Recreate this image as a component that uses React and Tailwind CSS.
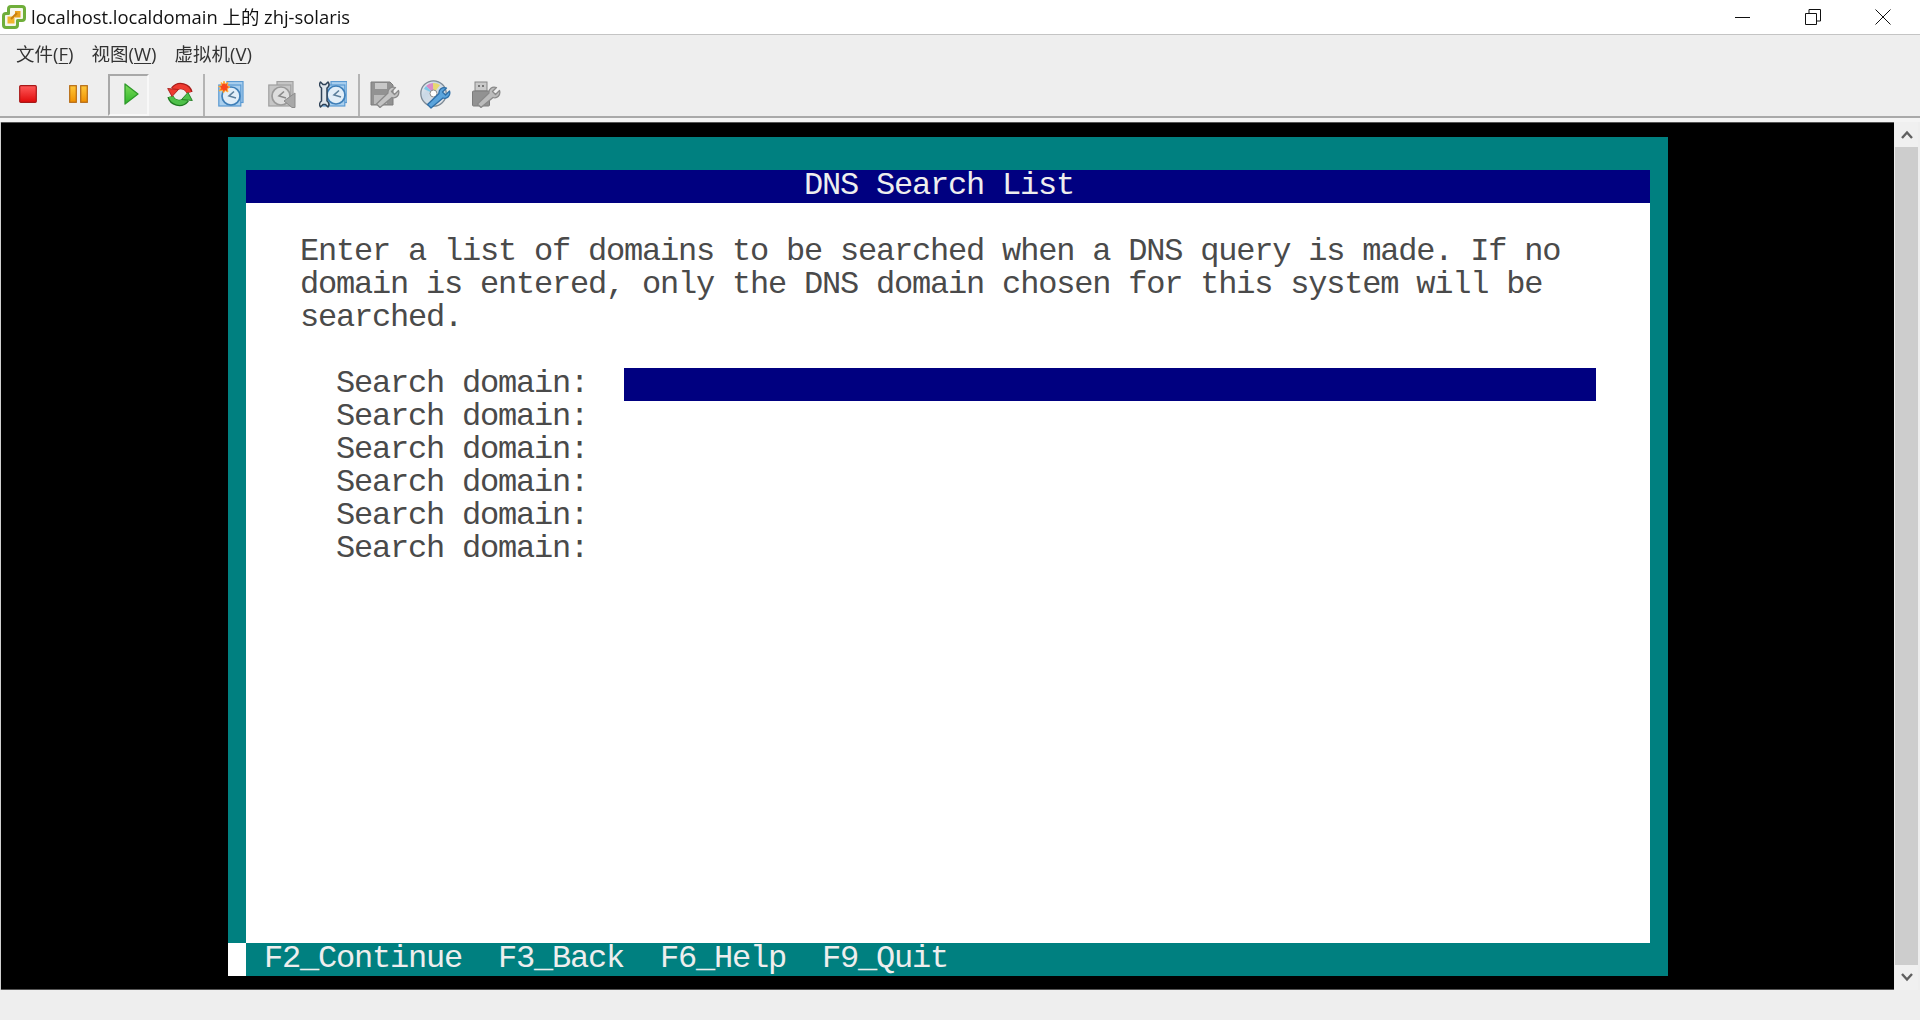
import React from "react";

const SANS = "font-['Open_Sans','Noto_Sans_CJK_SC',sans-serif]";

function Logo() {
  return (
    <svg width="24" height="24" viewBox="0 0 24 24" className="blur-[0.3px]">
      <path d="M9 1.5 H20 Q22.5 1.5 22.5 4 V13 Q22.5 15.5 20 15.5 H15.5 V20 Q15.5 22.5 13 22.5 H4 Q1.5 22.5 1.5 20 V11 Q1.5 8.5 4 8.5 H6.5 V4 Q6.5 1.5 9 1.5 Z" fill="#f6f6ee" stroke="#6fae3a" strokeWidth="3" strokeLinejoin="round" />
      <path d="M10.5 6 H18.5 V12.5 H13 V6 Z" fill="#e9a21c" />
      <path d="M5.5 11.5 H12.5 V18.5 H5.5 Z" fill="#f2b62e" />
      <path d="M9 14 L15 8" stroke="#c97f10" strokeWidth="2" />
    </svg>
  );
}

function Stop() {
  return (
    <svg width="18" height="18" viewBox="0 0 18 18" className="blur-[0.3px]">
      <defs>
        <linearGradient id="st" x1="0" y1="0" x2="0" y2="1">
          <stop offset="0" stopColor="#ff5a5a" />
          <stop offset="1" stopColor="#e00a0a" />
        </linearGradient>
      </defs>
      <rect x="0.7" y="0.7" width="16.6" height="16.6" rx="1" fill="url(#st)" stroke="#a81818" strokeWidth="1.2" />
    </svg>
  );
}

function Pause() {
  return (
    <svg width="19" height="18" viewBox="0 0 19 18" className="blur-[0.3px]">
      <defs>
        <linearGradient id="pa" x1="0" y1="0" x2="0" y2="1">
          <stop offset="0" stopColor="#ffc83a" />
          <stop offset="1" stopColor="#f09000" />
        </linearGradient>
      </defs>
      <rect x="0.7" y="0.7" width="6.6" height="16.6" fill="url(#pa)" stroke="#b56a12" strokeWidth="1.2" />
      <rect x="11.7" y="0.7" width="6.6" height="16.6" fill="url(#pa)" stroke="#b56a12" strokeWidth="1.2" />
    </svg>
  );
}

function Play() {
  return (
    <svg width="15" height="22" viewBox="0 0 15 22" className="ml-[6px] mb-[2px] blur-[0.3px]">
      <defs>
        <linearGradient id="pl" x1="0" y1="0" x2="0" y2="1">
          <stop offset="0" stopColor="#7ddc5a" />
          <stop offset="1" stopColor="#2fb52a" />
        </linearGradient>
      </defs>
      <path d="M1 1 L14 11 L1 21 Z" fill="url(#pl)" stroke="#2f9a2a" strokeWidth="1.3" strokeLinejoin="round" />
    </svg>
  );
}

function Refresh() {
  return (
    <svg width="26" height="25" viewBox="0 0 26 25" className="blur-[0.3px]">
      <g fill="none" strokeLinecap="butt">
        <path d="M22.5 10.5 C21 4.5 12 1 6.5 7.5" stroke="#a81d1a" strokeWidth="6.4" />
        <path d="M22 10.5 C20.5 5 12 1.5 6.8 7.8" stroke="#ee3a30" strokeWidth="4.6" />
        <path d="M3.5 14.5 C5 20.5 14 24 19.5 17.5" stroke="#1f7a20" strokeWidth="6.4" />
        <path d="M4 14.5 C5.5 20 14 23.5 19.2 17.2" stroke="#4fc04a" strokeWidth="4.6" />
      </g>
      <path d="M0.7 6.5 L11.5 7.5 L5 14.5 Z" fill="#ee3a30" stroke="#a81d1a" strokeWidth="0.9" strokeLinejoin="round" />
      <path d="M25.3 18.5 L14.5 17.5 L21 10.5 Z" fill="#4fc04a" stroke="#1f7a20" strokeWidth="0.9" strokeLinejoin="round" />
    </svg>
  );
}

function Clock({ gray, cx = 13, cy = 15 }) {
  const face = gray ? "#dedede" : "#e2eef8";
  const edge = gray ? "#a0a0a0" : "#5b9ad2";
  const back = gray ? "#c6c6c6" : "#a9cfee";
  return (
    <g>
      <rect x="9" y="0.5" width="16" height="21" fill={back} stroke={edge} strokeWidth="1.2" />
      <rect x="0.8" y="4" width="22" height="21" fill={back} stroke={edge} strokeWidth="1.2" />
      <circle cx={cx} cy={cy} r="9" fill={face} stroke={gray ? "#9a9a9a" : "#3f7fb8"} strokeWidth="1.7" />
      <path d={`M${cx + 3} ${cy - 4.5} L${cx - 2} ${cy} L${cx + 5} ${cy + 2}`} fill="none" stroke={gray ? "#8a8a8a" : "#5c7f9c"} strokeWidth="1.6" />
    </g>
  );
}

function SnapNew() {
  return (
    <svg width="26" height="26" viewBox="0 0 26 26" className="blur-[0.3px]">
      <Clock />
      <path d="M6 0 L7 3 L10 1.5 L9.3 4.7 L12 6 L9.3 7.5 L10 11 L7 9.5 L5.5 12 L4.5 9 L1 10 L3 7 L0.5 5.5 L3.5 4.5 L3 1.5 L5 3 Z" fill="#f8491d" stroke="#ffb43a" strokeWidth="0.9" />
    </svg>
  );
}

function SnapRevert() {
  return (
    <svg width="28" height="27" viewBox="0 0 28 27" className="blur-[0.3px]">
      <Clock gray />
      <path d="M27 12 V26.5 H24 L16 20 Z" fill="#a8a8a8" stroke="#8c8c8c" />
    </svg>
  );
}

function SnapManage() {
  return (
    <svg width="28" height="27" viewBox="0 0 28 27" className="blur-[0.3px]">
      <g transform="translate(3 0)">
        <Clock cx={14} cy={14} />
      </g>
      <path d="M1.5 1 L4 3.5 L6.5 3.5 L9 1 C10.5 3 10 5.5 8 7 V20 C10 21.5 10.5 24 9 26 L6.5 23.5 H4 L1.5 26 C0 24 0.5 21.5 2.5 20 V7 C0.5 5.5 0 3 1.5 1 Z" fill="#dfe5ea" stroke="#2f4257" strokeWidth="1.5" strokeLinejoin="round" />
    </svg>
  );
}

function Wrench({ color = "#a9a9a9", edge = "#858585" }) {
  return (
    <path d="M6 26.5 L2.5 23 L14 12 C13.5 8 17 5 21.5 6.5 L17.5 10.5 L20.5 13.5 L24.5 9.5 C26 14 22 18 18 16.5 Z" fill={color} stroke={edge} strokeWidth="1.3" strokeLinejoin="round" />
  );
}

function Floppy() {
  return (
    <svg width="30" height="27" viewBox="0 0 30 27" className="blur-[0.3px]">
      <path d="M1 1 H20 L23 4 V24 H1 Z" fill="#929292" stroke="#7c7c7c" />
      <rect x="5" y="2" width="12" height="6" fill="#c8c8c8" />
      <rect x="4" y="14" width="13" height="9" fill="#bababa" />
      <g transform="translate(4 0)">
        <Wrench color="#c4c4c4" edge="#8a8a8a" />
      </g>
    </svg>
  );
}

function Cd() {
  return (
    <svg width="32" height="29" viewBox="0 0 32 29" className="blur-[0.3px]">
      <defs>
        <linearGradient id="cd" x1="0" y1="0" x2="1" y2="1">
          <stop offset="0" stopColor="#f2f2f2" />
          <stop offset="0.35" stopColor="#c9d8e6" />
          <stop offset="1" stopColor="#e8e8e8" />
        </linearGradient>
      </defs>
      <circle cx="13.5" cy="13.5" r="12.7" fill="url(#cd)" stroke="#7d8a96" strokeWidth="1.3" />
      <path d="M13.5 13.5 L6 6 A11 11 0 0 1 13 3 Z" fill="#d88cc8" />
      <path d="M13.5 13.5 L13 3 A11 11 0 0 1 20 5 Z" fill="#e8d870" />
      <path d="M13.5 13.5 L4 9 A11 11 0 0 1 6 6 Z" fill="#7fc8e8" />
      <circle cx="13.5" cy="13.5" r="3.5" fill="#fff" stroke="#8c8c8c" />
      <g transform="translate(5 1.5)">
        <Wrench color="#5ba4dc" edge="#2f6ea6" />
      </g>
    </svg>
  );
}

function Usb() {
  return (
    <svg width="30" height="27" viewBox="0 0 30 27" className="blur-[0.3px]">
      <rect x="4" y="1" width="12" height="9" fill="#cacaca" stroke="#868686" />
      <rect x="1.5" y="10" width="17" height="15" rx="1" fill="#929292" stroke="#7c7c7c" />
      <rect x="7" y="4" width="2" height="2" fill="#777" />
      <rect x="11" y="4" width="2" height="2" fill="#777" />
      <g transform="translate(4 0)">
        <Wrench color="#bcbcbc" edge="#8a8a8a" />
      </g>
    </svg>
  );
}

function Tool({ children, className = "w-[50px]" }) {
  return <div className={`h-[42px] pb-[2px] flex items-center justify-center ${className}`}>{children}</div>;
}

function MenuItem({ zh, k, className }) {
  return (
    <span className={className}>
      {zh}(<span className="underline underline-offset-2">{k}</span>)
    </span>
  );
}

const body = [
  "Enter a list of domains to be searched when a DNS query is made. If no",
  "domain is entered, only the DNS domain chosen for this system will be",
  "searched.",
];

function Row({ children, className = "" }) {
  return <div className={`h-[33px] leading-[31px] whitespace-pre ${className}`}>{children}</div>;
}

export default function App() {
  return (
    <div className="w-[1920px] h-[1020px] overflow-hidden flex flex-col bg-[#eeeeee]">
      <header className={`h-[35px] bg-white flex items-center border-b border-[#c4c4c4] ${SANS}`}>
        <div className="ml-[2px] w-[29px] flex items-center">
          <Logo />
        </div>
        <span className="text-[18.4px] text-[#111] leading-none blur-[0.3px]">localhost.localdomain 上的 zhj-solaris</span>
        <div className="ml-auto mr-[2px] flex items-center">
          <div className="w-[70px] flex justify-center">
            <svg width="16" height="16" viewBox="0 0 16 16"><path d="M0 8.5H15" stroke="#111" strokeWidth="1" /></svg>
          </div>
          <div className="w-[70px] flex justify-center">
            <svg width="16" height="16" viewBox="0 0 16 16" fill="none" stroke="#111"><path d="M0.5 4.5H11.5V15.5H0.5Z" /><path d="M4 4V0.5H15.5V12H12" /></svg>
          </div>
          <div className="w-[70px] flex justify-center">
            <svg width="16" height="16" viewBox="0 0 16 16" stroke="#111"><path d="M0.5 0.5L15.5 15.5M15.5 0.5L0.5 15.5" /></svg>
          </div>
        </div>
      </header>

      <div className={`h-[37px] flex items-center pl-[16px] text-[18.5px] text-[#333] blur-[0.35px] ${SANS}`}>
        <MenuItem zh="文件" k="F" className="mr-[18px]" />
        <MenuItem zh="视图" k="W" className="mr-[18px]" />
        <MenuItem zh="虚拟机" k="V" />
      </div>

      <div className="h-[42px] mt-[2px] flex items-center pl-[3px]">
        <Tool><Stop /></Tool>
        <Tool><Pause /></Tool>
        <div className="w-[50px] h-[42px] flex items-center justify-center">
          <div className="w-[41px] h-[42px] flex items-center justify-center border-2 border-t-[#a8a8a8] border-l-[#a8a8a8] border-r-[#f8f8f8] border-b-[#f8f8f8]">
            <Play />
          </div>
        </div>
        <Tool className="w-[50px] pl-[3px]"><Refresh /></Tool>
        <div className="w-[2px] h-[42px] bg-[#b4b4b4]" />
        <Tool className="w-[51px]"><SnapNew /></Tool>
        <Tool className="w-[51px]"><SnapRevert /></Tool>
        <Tool className="w-[51px]"><SnapManage /></Tool>
        <div className="w-[2px] h-[42px] bg-[#b4b4b4]" />
        <Tool><Floppy /></Tool>
        <Tool className="w-[51px]"><Cd /></Tool>
        <Tool><Usb /></Tool>
      </div>

      <div className="h-[2px] bg-[#a9a9a9]" />
      <div className="h-[4px] bg-[#f4f4f4]" />

      <div className="h-[868px] flex">
        <div className="w-[1px] bg-[#d0d0d0]" />
        <div className="w-[1894px] bg-black pl-[227px] pt-[14px] border-t border-b border-[#555]">
          <div className="w-[1440px] h-[839px] bg-[#008080] flex flex-col font-['Liberation_Mono',monospace] text-[32px] tracking-[-1.2px]">
            <div className="h-[33px]" />
            <div className="mx-[18px] flex-1 flex flex-col">
              <Row className="bg-[#000080] text-[#eeeeee] pl-[558px]">DNS Search List</Row>
              <div className="flex-1 bg-white text-[#4a4a4a] pl-[54px]">
                <div className="h-[33px]" />
                {body.map((t) => (
                  <Row key={t}>{t}</Row>
                ))}
                <div className="h-[33px]" />
                {Array.from({ length: 6 }).map((_, i) => (
                  <div key={i} className="h-[33px] flex">
                    <span className="w-[324px] pl-[36px] leading-[31px] whitespace-pre">Search domain:</span>
                    {i === 0 && <span className="w-[972px] bg-[#000080]" />}
                  </div>
                ))}
              </div>
            </div>
            <div className="h-[33px] flex">
              <div className="w-[18px] bg-white" />
              <Row className="text-[#eeeeee] pl-[18px]">F2_Continue  F3_Back  F6_Help  F9_Quit</Row>
            </div>
          </div>
        </div>
        <div className="w-[23px] ml-[1px] mr-[2px] flex flex-col bg-[#f0f0f0]">
          <div className="h-[25px] flex items-center justify-center">
            <svg width="12" height="9" viewBox="0 0 12 9" fill="none" stroke="#606060" strokeWidth="2.4"><path d="M1 8L6 2.5L11 8" /></svg>
          </div>
          <div className="flex-1 bg-[#cdcdcd]" />
          <div className="h-[25px] flex items-center justify-center">
            <svg width="12" height="9" viewBox="0 0 12 9" fill="none" stroke="#606060" strokeWidth="2.4"><path d="M1 1L6 6.5L11 1" /></svg>
          </div>
        </div>
      </div>
      <div className="flex-1 bg-[#eeeeee]" />
    </div>
  );
}
